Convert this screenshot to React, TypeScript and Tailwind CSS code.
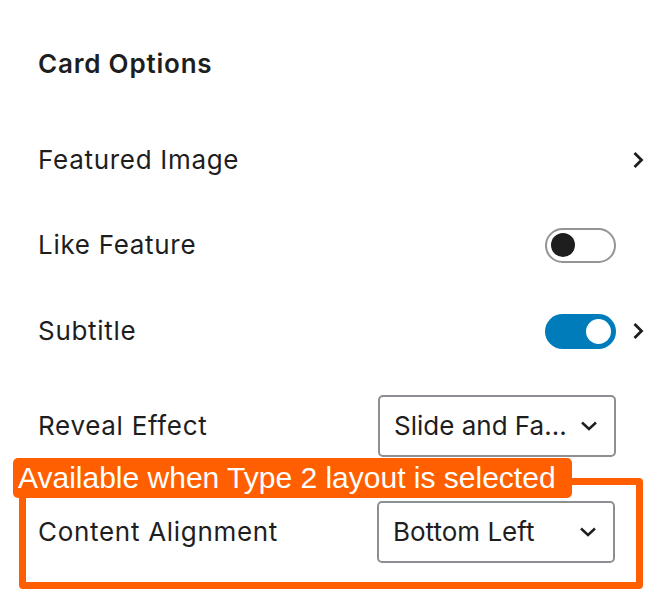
import React from "react";

const font = { fontFamily: "Inter, 'Noto Sans', sans-serif" };

function ChevronRight() {
  return (
    <svg width="12" height="18" viewBox="0 0 12 18" fill="none" className="block">
      <path d="M2.5 2 L9.5 9 L2.5 16" stroke="#1e1e1e" strokeWidth="2.8" />
    </svg>
  );
}

function ChevronDown() {
  return (
    <svg width="18" height="10" viewBox="0 0 18 10" fill="none" className="block">
      <path d="M2 1.5 L9 8 L16 1.5" stroke="#1e1e1e" strokeWidth="2.4" />
    </svg>
  );
}

function Toggle({ on }: { on: boolean }) {
  if (on) {
    return (
      <div className="w-[71px] h-[35px] rounded-full bg-[#007cba] flex items-center justify-end pr-[5px]">
        <div className="w-[25px] h-[25px] rounded-full bg-white" />
      </div>
    );
  }
  return (
    <div className="w-[71px] h-[35px] rounded-full border-2 border-[#949494] bg-white flex items-center pl-[4px]">
      <div className="w-[24px] h-[24px] rounded-full bg-[#1e1e1e]" />
    </div>
  );
}

function Select({ value }: { value: string }) {
  return (
    <div className="w-[238px] h-[62px] rounded-[5px] border-2 border-[#8c8f94] bg-white flex items-center justify-between pl-[14px] pr-[16px]">
      <span className="text-[26px] text-[#1e1e1e] leading-none">{value}</span>
      <ChevronDown />
    </div>
  );
}

export default function App() {
  return (
    <div className="w-[672px] h-[610px] bg-white pl-[38px] pr-[28px] pt-[48px] text-[#1e1e1e]" style={font}>
      <div className="h-[32px] flex items-center text-[26px] tracking-[0.8px] font-semibold leading-none">Card Options</div>

      <div className="mt-[62px] h-[36px] flex items-center justify-between">
        <span className="text-[26px] tracking-[0.7px] leading-none">Featured Image</span>
        <div className="w-[28px] flex justify-end">
          <ChevronRight />
        </div>
      </div>

      <div className="mt-[49px] h-[36px] flex items-center justify-between">
        <span className="text-[26px] tracking-[0.7px] leading-none">Like Feature</span>
        <div className="flex items-center">
          <Toggle on={false} />
          <div className="w-[28px]" />
        </div>
      </div>

      <div className="mt-[50px] h-[36px] flex items-center justify-between">
        <span className="text-[26px] tracking-[0.7px] leading-none">Subtitle</span>
        <div className="flex items-center">
          <Toggle on={true} />
          <div className="w-[28px] flex justify-end">
            <ChevronRight />
          </div>
        </div>
      </div>

      <div className="mt-[46px] flex items-center justify-between pr-[28px]">
        <span className="text-[26px] tracking-[0.7px] leading-none">Reveal Effect</span>
        <Select value="Slide and Fa..." />
      </div>

      <div className="relative mt-[21px] -ml-[19px] mr-[1px] border-[7px] border-[#ff5f00] rounded-[4px] pl-[12px] pr-[21px] pt-[16px] pb-[19px] flex items-center justify-between">
        <span className="text-[26px] tracking-[0.7px] leading-none">Content Alignment</span>
        <Select value="Bottom Left" />
        <div
          className="absolute left-[-13px] top-[-27px] h-[40px] w-[559px] rounded-[5px] bg-[#ff5f00] pl-[5px] flex items-center text-white text-[30px] leading-none whitespace-nowrap"
          style={{ fontFamily: "'Liberation Sans', Arial, sans-serif" }}
        >
          Available when Type 2 layout is selected
        </div>
      </div>
    </div>
  );
}
